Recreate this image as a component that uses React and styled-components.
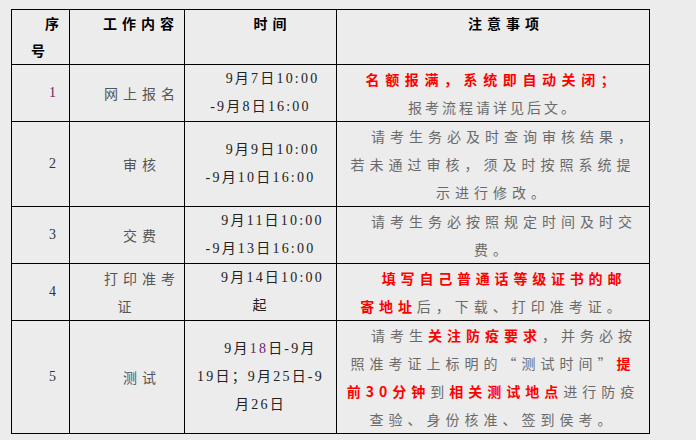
import React from 'react';
import styled, { createGlobalStyle } from 'styled-components';

const GlobalStyle = createGlobalStyle`
  html, body {
    margin: 0;
    padding: 0;
    background: #ececec;
  }
  body {
    font-family: "Liberation Serif", "Noto Sans CJK SC", serif;
  }
`

const Page = styled.div`
  padding: 9px 0 0 11px;
`

const Table = styled.table`
  border-collapse: collapse;
  table-layout: fixed;
`

const Row = styled.tr`
  height: ${props => props.$h}px;
`

const Cell = styled.td`
  border: 1px solid #000;
  padding: 0;
  text-align: center;
  vertical-align: middle;
  font-size: 14px;
  line-height: 28px;
  white-space: nowrap;
  text-indent: ${props => props.$indent || 0}px;
`

const HeadCell = styled(Cell).attrs({ as: 'th' })`
  vertical-align: top;
  font-weight: bold;
  color: #000;
  letter-spacing: 5px;
  font-family: "Noto Sans CJK SC", sans-serif;
  line-height: 27px;
  width: ${props => props.$w}px;
`

const NumCell = styled(Cell)`
  padding-left: 24px;
  color: ${props => props.$color || '#333'};
  font-family: "Liberation Serif", serif;
`

const TaskCell = styled(Cell)`
  color: #555;
  letter-spacing: 5px;
  font-family: "Noto Sans CJK SC", sans-serif;
  text-indent: 30px;
`

const TimeCell = styled(Cell)`
  color: #222;
  letter-spacing: 2.2px;
`

const NoteCell = styled(Cell)`
  color: #6a6a6a;
  letter-spacing: ${props => props.$ls || 5}px;
  font-family: "Noto Sans CJK SC", sans-serif;
  padding: 0 4px;
`

const Red = styled.span`
  color: #ff0000;
  font-weight: bold;
  letter-spacing: ${props => props.$ls ? props.$ls + 'px' : 'inherit'};
`

const Plain = styled.span`
  letter-spacing: ${props => props.$ls}px;
`

const Purple = styled.span`
  color: #6a1a6a;
`

export default function App() {
  return (
    <Page>
      <GlobalStyle />
      <Table>
        <tbody>
          <Row $h={55}>
            <HeadCell $w={57} $indent={28}>序<br />号</HeadCell>
            <HeadCell $w={114} $indent={28}>工作内容</HeadCell>
            <HeadCell $w={151} $indent={24}>时间</HeadCell>
            <HeadCell $w={312} $indent={26}>注意事项</HeadCell>
          </Row>
          <Row $h={57}>
            <NumCell $color="#6a1a6a">1</NumCell>
            <TaskCell>网上报名</TaskCell>
            <TimeCell $indent={24}>9月7日10:00<br />-9月8日16:00</TimeCell>
            <NoteCell>
              <Red $ls={5.6}>名额报满，系统即自动关闭；</Red><br />
              <Plain $ls={3}>报考流程请详见后文。</Plain>
            </NoteCell>
          </Row>
          <Row $h={85}>
            <NumCell>2</NumCell>
            <TaskCell>审核</TaskCell>
            <TimeCell $indent={24}>9月9日10:00<br />-9月10日16:00</TimeCell>
            <NoteCell $indent={22}>
              请考生务必及时查询审核结果，<br />
              若未通过审核，须及时按照系统提<br />
              示进行修改。
            </NoteCell>
          </Row>
          <Row $h={57}>
            <NumCell>3</NumCell>
            <TaskCell>交费</TaskCell>
            <TimeCell $indent={24}>9月11日10:00<br />-9月13日16:00</TimeCell>
            <NoteCell $indent={22}>
              请考生务必按照规定时间及时交<br />
              费。
            </NoteCell>
          </Row>
          <Row $h={57}>
            <NumCell>4</NumCell>
            <TaskCell>打印准考<br />证</TaskCell>
            <TimeCell $indent={24}>9月14日10:00<br />起</TimeCell>
            <NoteCell $indent={22}>
              <Red $ls={4.8}>填写自己普通话等级证书的邮</Red><br />
              <Red $ls={4.8}>寄地址</Red>后，下载、打印准考证。
            </NoteCell>
          </Row>
          <Row $h={113}>
            <NumCell>5</NumCell>
            <TaskCell>测试</TaskCell>
            <TimeCell $indent={20}>
              9月<Purple>18</Purple>日-9月<br />
              19日；9月25日-9<br />
              月26日
            </TimeCell>
            <NoteCell $indent={22}>
              请考生<Red>关注防疫要求</Red>，并务必按<br />
              照准考证上标明的“测试时间”<Red>提</Red><br />
              <Red>前30分钟</Red>到<Red>相关测试地点</Red>进行防疫<br />
              查验、身份核准、签到侯考。
            </NoteCell>
          </Row>
        </tbody>
      </Table>
    </Page>
  );
}
